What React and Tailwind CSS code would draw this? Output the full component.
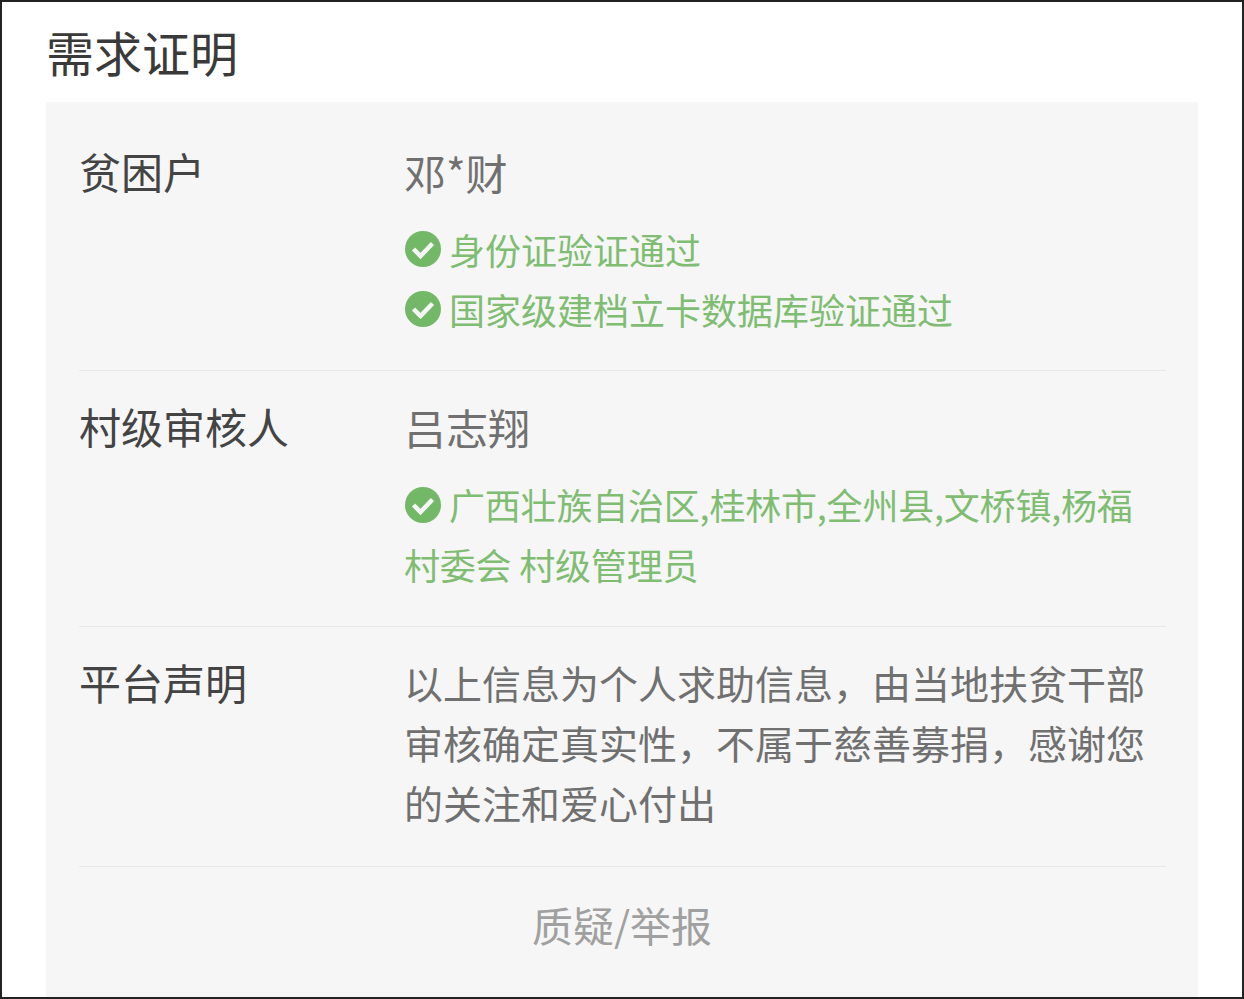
const CheckIcon = ({ className = "" }) => (
  <svg viewBox="0 0 36 36" className={`w-[36px] h-[36px] shrink-0 ${className}`}>
    <circle cx="18" cy="18" r="18" fill="#72b866" />
    <path d="M8.5 18l7 7L27.5 12.5" fill="none" stroke="#f6f6f6" strokeWidth="4.5" />
  </svg>
);

const Row = ({ label, children, first, last }) => (
  <div className={`flex ml-[33px] mr-[32px] ${first ? "" : "pt-[26px]"} ${last ? "" : "border-b border-[#e8e8e8]"}`}>
    <div className="w-[325px] shrink-0 -mt-[1px] text-[42px] leading-[60px] text-[#444444]">{label}</div>
    <div className="flex-1 min-w-0">{children}</div>
  </div>
);

export default function App() {
  return (
    <div className="h-[999px] overflow-hidden bg-white border-2 border-[#222222] pl-[44px] pr-[44px] font-['Noto_Sans_CJK_SC',sans-serif]">
      <h1 className="text-[48px] leading-[98px] h-[100px] font-normal text-[#3a3a3a]">需求证明</h1>
      <div className="bg-[#f6f6f6] h-[900px] pt-[40px]">
        <Row label="贫困户" first>
          <div className="text-[42px] leading-[60px] text-[#707070]">邓*财</div>
          <div className="mt-[17px] pb-[31px] text-[36px] leading-[60px] text-[#7fbd72]">
            <div className="flex items-center gap-[8px]"><CheckIcon className="ml-[1px]" />身份证验证通过</div>
            <div className="flex items-center gap-[8px]"><CheckIcon className="ml-[1px]" />国家级建档立卡数据库验证通过</div>
          </div>
        </Row>
        <Row label="村级审核人">
          <div className="text-[42px] leading-[60px] text-[#707070]">吕志翔</div>
          <div className="mt-[17px] pb-[32px] text-[36px] leading-[60px] tracking-[-0.2px] text-[#7fbd72]">
            <CheckIcon className="inline-block ml-[1px] mr-[8px] align-[-3px]" />广西壮族自治区,桂林市,全州县,文桥镇,杨福村委会 村级管理员
          </div>
        </Row>
        <Row label="平台声明">
          <div className="-mt-[1px] pb-[34px] text-[39px] leading-[60px] text-[#707070]">
            以上信息为个人求助信息，由当地扶贫干部审核确定真实性，不属于慈善募捐，感谢您的关注和爱心付出
          </div>
        </Row>
        <div className="text-center text-[41px] leading-[60px] pt-[27px] text-[#a0a0a0]">质疑/举报</div>
      </div>
    </div>
  );
}
